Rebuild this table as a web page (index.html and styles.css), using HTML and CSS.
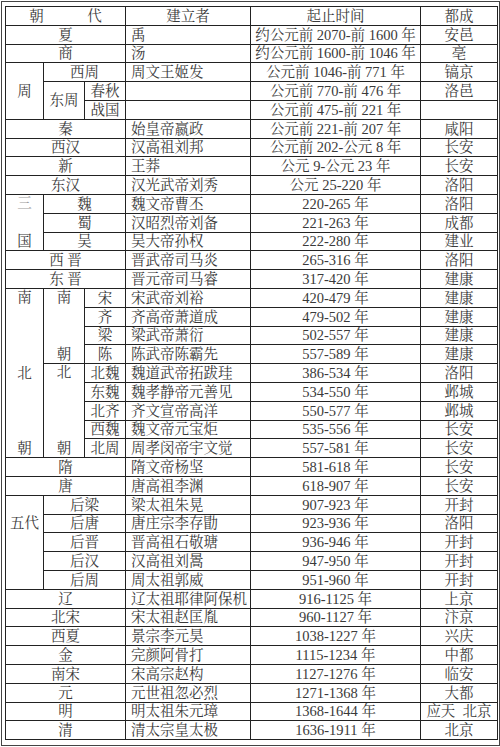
FILE: index.html
```html
<!DOCTYPE html>
<html lang="zh-CN">
<head>
<meta charset="utf-8">
<title>中国历代王朝</title>
<link rel="stylesheet" href="styles.css">
</head>
<body>
<div class="frame">
<table class="dyn">
<colgroup><col class="w1"><col class="w2"><col class="w3"><col class="w4"><col class="w5"><col class="w6"></colgroup>
<tr><td colspan="3">朝　　　代</td><td>建立者</td><td>起止时间</td><td>都成</td></tr>
<tr><td colspan="3">夏</td><td class="who">禹</td><td>约公元前 2070-前 1600 年</td><td>安邑</td></tr>
<tr><td colspan="3">商</td><td class="who">汤</td><td>约公元前 1600-前 1046 年</td><td>亳</td></tr>
<tr><td rowspan="3">周</td><td colspan="2">西周</td><td class="who">周文王姬发</td><td>公元前 1046-前 771 年</td><td>镐京</td></tr>
<tr><td rowspan="2">东周</td><td>春秋</td><td class="who"></td><td>公元前 770-前 476 年</td><td>洛邑</td></tr>
<tr><td>战国</td><td class="who"></td><td>公元前 475-前 221 年</td><td></td></tr>
<tr><td colspan="3">秦</td><td class="who">始皇帝嬴政</td><td>公元前 221-前 207 年</td><td>咸阳</td></tr>
<tr><td colspan="3">西汉</td><td class="who">汉高祖刘邦</td><td>公元前 202-公元 8 年</td><td>长安</td></tr>
<tr><td colspan="3">新</td><td class="who">王莽</td><td>公元 9-公元 23 年</td><td>长安</td></tr>
<tr><td colspan="3">东汉</td><td class="who">汉光武帝刘秀</td><td>公元 25-220 年</td><td>洛阳</td></tr>
<tr><td rowspan="3"><div class="stack s3"><span class="faint">三</span><span></span><span>国</span></div></td><td colspan="2">魏</td><td class="who">魏文帝曹丕</td><td>220-265 年</td><td>洛阳</td></tr>
<tr><td colspan="2">蜀</td><td class="who">汉昭烈帝刘备</td><td>221-263 年</td><td>成都</td></tr>
<tr><td colspan="2">吴</td><td class="who">吴大帝孙权</td><td>222-280 年</td><td>建业</td></tr>
<tr><td colspan="3">西 晋</td><td class="who">晋武帝司马炎</td><td>265-316 年</td><td>洛阳</td></tr>
<tr><td colspan="3">东 晋</td><td class="who">晋元帝司马睿</td><td>317-420 年</td><td>建康</td></tr>
<tr><td rowspan="9"><div class="stack s9"><span>南</span><span></span><span></span><span></span><span>北</span><span></span><span></span><span></span><span>朝</span></div></td><td rowspan="4"><div class="stack s4"><span>南</span><span></span><span></span><span>朝</span></div></td><td>宋</td><td class="who">宋武帝刘裕</td><td>420-479 年</td><td>建康</td></tr>
<tr><td>齐</td><td class="who">齐高帝萧道成</td><td>479-502 年</td><td>建康</td></tr>
<tr><td>梁</td><td class="who">梁武帝萧衍</td><td>502-557 年</td><td>建康</td></tr>
<tr><td>陈</td><td class="who">陈武帝陈霸先</td><td>557-589 年</td><td>建康</td></tr>
<tr><td rowspan="5"><div class="stack s5"><span>北</span><span></span><span></span><span></span><span>朝</span></div></td><td>北魏</td><td class="who">魏道武帝拓跋珪</td><td>386-534 年</td><td>洛阳</td></tr>
<tr><td>东魏</td><td class="who">魏孝静帝元善见</td><td>534-550 年</td><td>邺城</td></tr>
<tr><td>北齐</td><td class="who">齐文宣帝高洋</td><td>550-577 年</td><td>邺城</td></tr>
<tr><td>西魏</td><td class="who">魏文帝元宝炬</td><td>535-556 年</td><td>长安</td></tr>
<tr><td>北周</td><td class="who">周孝闵帝宇文觉</td><td>557-581 年</td><td>长安</td></tr>
<tr><td colspan="3">隋</td><td class="who">隋文帝杨坚</td><td>581-618 年</td><td>长安</td></tr>
<tr><td colspan="3">唐</td><td class="who">唐高祖李渊</td><td>618-907 年</td><td>长安</td></tr>
<tr><td rowspan="5"><div class="stack s5"><span></span><span>五代</span><span></span><span></span><span></span></div></td><td colspan="2">后梁</td><td class="who">梁太祖朱晃</td><td>907-923 年</td><td>开封</td></tr>
<tr><td colspan="2">后唐</td><td class="who">唐庄宗李存勖</td><td>923-936 年</td><td>洛阳</td></tr>
<tr><td colspan="2">后晋</td><td class="who">晋高祖石敬瑭</td><td>936-946 年</td><td>开封</td></tr>
<tr><td colspan="2">后汉</td><td class="who">汉高祖刘暠</td><td>947-950 年</td><td>开封</td></tr>
<tr><td colspan="2">后周</td><td class="who">周太祖郭威</td><td>951-960 年</td><td>开封</td></tr>
<tr><td colspan="3">辽</td><td class="who">辽太祖耶律阿保机</td><td>916-1125 年</td><td>上京</td></tr>
<tr><td colspan="3">北宋</td><td class="who">宋太祖赵匡胤</td><td>960-1127 年</td><td>汴京</td></tr>
<tr><td colspan="3">西夏</td><td class="who">景宗李元昊</td><td>1038-1227 年</td><td>兴庆</td></tr>
<tr><td colspan="3">金</td><td class="who">完颜阿骨打</td><td>1115-1234 年</td><td>中都</td></tr>
<tr><td colspan="3">南宋</td><td class="who">宋高宗赵构</td><td>1127-1276 年</td><td>临安</td></tr>
<tr><td colspan="3">元</td><td class="who">元世祖忽必烈</td><td>1271-1368 年</td><td>大都</td></tr>
<tr><td colspan="3">明</td><td class="who">明太祖朱元璋</td><td>1368-1644 年</td><td>应天&nbsp;&nbsp;北京</td></tr>
<tr><td colspan="3">清</td><td class="who">清太宗皇太极</td><td>1636-1911 年</td><td>北京</td></tr>
</table>
</div>
</body>
</html>
```

FILE: styles.css
```css
html, body {
  margin: 0;
  padding: 0;
  background: #ffffff;
}

.frame {
  box-sizing: border-box;
  width: 499px;
  height: 745px;
  margin: 1px 0 0 1px;
  padding: 4px 2px 4px 3px;
  border: 1px solid #444444;
}

.dyn {
  border-collapse: collapse;
  table-layout: fixed;
  width: 492px;
  font-family: "Liberation Serif", "Noto Serif CJK SC", "Noto Sans CJK SC", serif;
  font-size: 14.5px;
  color: #3a3a3a;
}

.w1 { width: 38px; }
.w2 { width: 41px; }
.w3 { width: 41px; }
.w4 { width: 125px; }
.w5 { width: 170px; }
.w6 { width: 77px; }

.dyn tr {
  height: 18.8px;
}

.dyn td {
  border: 1px solid #222222;
  padding: 0;
  text-align: center;
  vertical-align: middle;
  line-height: 14px;
  white-space: nowrap;
  overflow: hidden;
}

.dyn td.who {
  text-align: left;
  padding-left: 5px;
}

.stack {
  display: flex;
  flex-direction: column;
  justify-content: space-between;
  align-items: center;
  overflow: hidden;
}

.stack > span {
  display: block;
  height: 17px;
  line-height: 17px;
}

.stack > .faint {
  color: #9a9a9a;
}

.s3 { height: 55px; }
.s4 { height: 74px; }
.s5 { height: 93px; }
.s9 { height: 168px; }
```
